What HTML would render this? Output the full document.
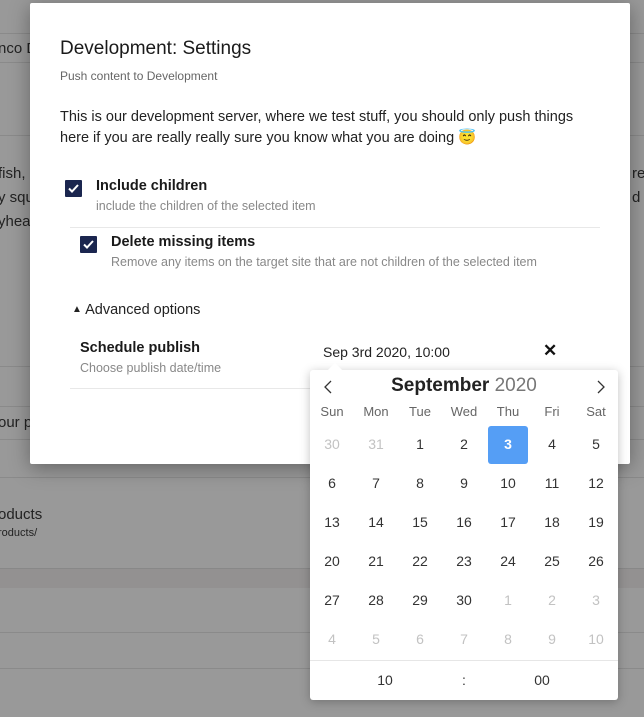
<!DOCTYPE html>
<html><head><style>
*{box-sizing:border-box;margin:0;padding:0}
body{width:644px;height:717px;overflow:hidden;background:#999;font-family:"Liberation Sans",sans-serif;position:relative;color:#1b264f}
.bg{position:absolute;color:#222;font-size:14px}
.line{position:absolute;left:0;width:644px;height:1px;background:#8a8a8a}
.modal{position:absolute;left:30px;top:3px;width:600px;height:461px;background:#fff;box-shadow:0 4px 20px rgba(0,0,0,.35);border-radius:2px}
.t{position:absolute;white-space:nowrap}
.cb{position:absolute;width:17px;height:17px;background:#1b264f;border-radius:1px}
.cb svg{position:absolute;left:3px;top:4px}
.cal{position:absolute;left:310px;top:370px;width:308px;height:330px;background:#fff;box-shadow:0 2px 10px rgba(0,0,0,.25);border-radius:3px}
.g{position:absolute;left:0;top:0;width:308px}
.c{position:absolute;width:40px;text-align:center;font-size:14px;color:#333}
.dim{color:#c2c2c2}
.hd{color:#666;font-size:13px}
</style></head><body>
<div class="line" style="top:33px"></div><div class="line" style="top:62px"></div>
<div class="line" style="top:135px"></div>
<div class="bg" style="left:-2px;top:40px;font-size:15px">nco D</div>
<div class="bg" style="left:-2px;top:162px;font-size:15px;line-height:24px">fish, s<br>y squ<br>yhead</div>
<div class="bg" style="left:632px;top:162px;font-size:15px;line-height:24px">red<br>d v</div>
<div class="line" style="top:366px"></div>
<div class="line" style="top:406px"></div><div class="line" style="top:439px"></div>
<div class="bg" style="left:-2px;top:414px;font-size:15px">our p</div>
<div class="line" style="top:477px"></div>
<div class="bg" style="left:-2px;top:506px;font-size:15px">oducts</div>
<div class="bg" style="left:-2px;top:527px;font-size:11px">roducts/</div>
<div class="line" style="top:568px;height:1px;background:#888"></div>
<div style="position:absolute;left:0;top:569px;width:644px;height:19px;background:#939191"></div>
<div class="line" style="top:632px"></div><div class="line" style="top:668px"></div>

<div class="modal">
<div class="t" style="left:30px;top:35px;font-size:19px;color:#1a1a1a;font-weight:500">Development: Settings</div>
<div class="t" style="left:30px;top:66px;font-size:12px;color:#666">Push content to Development</div>
<div class="t" style="left:30px;top:104px;font-size:14.5px;color:#222;line-height:21px">This is our development server, where we test stuff, you should only push things<br>here if you are really really sure you know what you are doing 😇</div>
<div class="cb" style="left:35px;top:177px"><svg width="11" height="9" viewBox="0 0 11 9"><path d="M1 4.5L4 7.5L10 1" stroke="#fff" stroke-width="2" fill="none"/></svg></div>
<div class="t" style="left:66px;top:175px;font-size:14.5px;color:#1a1a1a;font-weight:bold">Include children</div>
<div class="t" style="left:66px;top:196px;font-size:12.5px;color:#888">include the children of the selected item</div>
<div style="position:absolute;left:40px;top:224px;width:530px;height:1px;background:#e8e8e8"></div>
<div class="cb" style="left:50px;top:233px"><svg width="11" height="9" viewBox="0 0 11 9"><path d="M1 4.5L4 7.5L10 1" stroke="#fff" stroke-width="2" fill="none"/></svg></div>
<div class="t" style="left:81px;top:231px;font-size:14.5px;color:#1a1a1a;font-weight:bold">Delete missing items</div>
<div class="t" style="left:81px;top:252px;font-size:12.5px;color:#888">Remove any items on the target site that are not children of the selected item</div>
<div class="t" style="left:42px;top:299px;font-size:14.5px;color:#222"><span style="font-size:10px;position:relative;top:-2px">▲</span> Advanced options</div>
<div class="t" style="left:50px;top:337px;font-size:14.5px;color:#1a1a1a;font-weight:bold">Schedule publish</div>
<div class="t" style="left:50px;top:358px;font-size:12.5px;color:#888">Choose publish date/time</div>
<div class="t" style="left:293px;top:341px;font-size:14px;color:#222">Sep 3rd 2020, 10:00</div>
<div class="t" style="left:513px;top:338px;font-size:17px;color:#111;font-weight:bold">✕</div>
<div style="position:absolute;left:40px;top:385px;width:240px;height:1px;background:#e8e8e8"></div>
</div>

<div class="cal">
<div style="position:absolute;left:20px;top:-5px;width:10px;height:10px;background:#fff;transform:rotate(45deg)"></div>
<svg style="position:absolute;left:13px;top:10px" width="10" height="14"><path d="M8 1L2 7L8 13" stroke="#333" stroke-width="1.3" fill="none"/></svg>
<svg style="position:absolute;left:286px;top:10px" width="10" height="14"><path d="M2 1L8 7L2 13" stroke="#333" stroke-width="1.3" fill="none"/></svg>
<div class="t" style="left:0;width:308px;text-align:center;top:5px;font-size:19px"><b style="color:#222">September</b> <span style="color:#777">2020</span></div>
<div class="g">
<div class="c hd" style="left:2px;top:34px">Sun</div><div class="c hd" style="left:46px;top:34px">Mon</div><div class="c hd" style="left:90px;top:34px">Tue</div><div class="c hd" style="left:134px;top:34px">Wed</div><div class="c hd" style="left:178px;top:34px">Thu</div><div class="c hd" style="left:222px;top:34px">Fri</div><div class="c hd" style="left:266px;top:34px">Sat</div>
<div style="position:absolute;left:178px;top:56px;width:40px;height:38px;background:#559ef5;border-radius:3px"></div>
<div class="c dim" style="left:2px;top:66px">30</div><div class="c dim" style="left:46px;top:66px">31</div><div class="c" style="left:90px;top:66px">1</div><div class="c" style="left:134px;top:66px">2</div><div class="c" style="left:178px;top:66px;color:#fff;font-weight:bold">3</div><div class="c" style="left:222px;top:66px">4</div><div class="c" style="left:266px;top:66px">5</div>
<div class="c" style="left:2px;top:105px">6</div><div class="c" style="left:46px;top:105px">7</div><div class="c" style="left:90px;top:105px">8</div><div class="c" style="left:134px;top:105px">9</div><div class="c" style="left:178px;top:105px">10</div><div class="c" style="left:222px;top:105px">11</div><div class="c" style="left:266px;top:105px">12</div>
<div class="c" style="left:2px;top:144px">13</div><div class="c" style="left:46px;top:144px">14</div><div class="c" style="left:90px;top:144px">15</div><div class="c" style="left:134px;top:144px">16</div><div class="c" style="left:178px;top:144px">17</div><div class="c" style="left:222px;top:144px">18</div><div class="c" style="left:266px;top:144px">19</div>
<div class="c" style="left:2px;top:183px">20</div><div class="c" style="left:46px;top:183px">21</div><div class="c" style="left:90px;top:183px">22</div><div class="c" style="left:134px;top:183px">23</div><div class="c" style="left:178px;top:183px">24</div><div class="c" style="left:222px;top:183px">25</div><div class="c" style="left:266px;top:183px">26</div>
<div class="c" style="left:2px;top:222px">27</div><div class="c" style="left:46px;top:222px">28</div><div class="c" style="left:90px;top:222px">29</div><div class="c" style="left:134px;top:222px">30</div><div class="c dim" style="left:178px;top:222px">1</div><div class="c dim" style="left:222px;top:222px">2</div><div class="c dim" style="left:266px;top:222px">3</div>
<div class="c dim" style="left:2px;top:261px">4</div><div class="c dim" style="left:46px;top:261px">5</div><div class="c dim" style="left:90px;top:261px">6</div><div class="c dim" style="left:134px;top:261px">7</div><div class="c dim" style="left:178px;top:261px">8</div><div class="c dim" style="left:222px;top:261px">9</div><div class="c dim" style="left:266px;top:261px">10</div>
</div>
<div style="position:absolute;left:0;top:290px;width:308px;height:1px;background:#e6e6e6"></div>
<div class="c" style="left:55px;top:302px">10</div>
<div class="c" style="left:134px;top:302px">:</div>
<div class="c" style="left:212px;top:302px">00</div>
</div>
</body></html>
